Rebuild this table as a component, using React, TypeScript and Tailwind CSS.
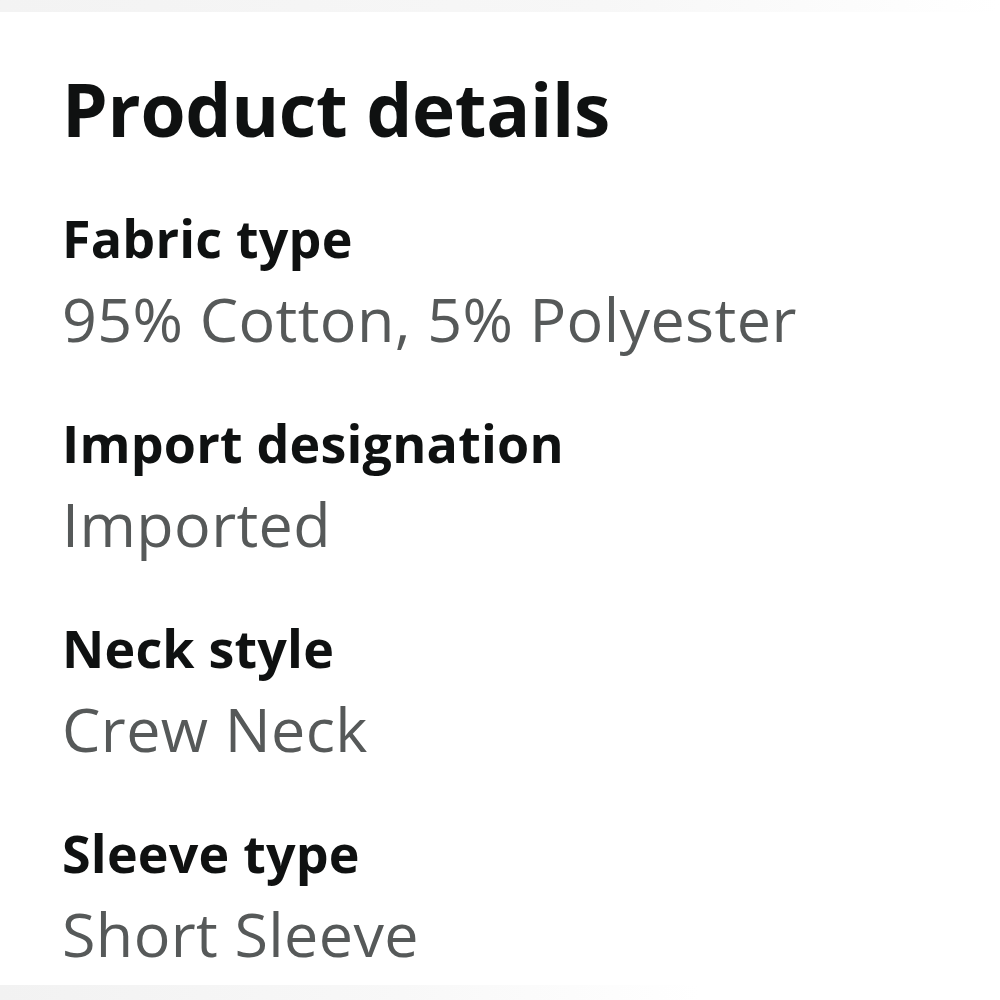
import React from 'react';

const details = [
  { label: 'Fabric type', value: '95% Cotton, 5% Polyester' },
  { label: 'Import designation', value: 'Imported' },
  { label: 'Neck style', value: 'Crew Neck' },
  { label: 'Sleeve type', value: 'Short Sleeve' },
];

export default function App() {
  return (
    <div className="w-[1000px] h-[1000px] bg-white flex flex-col overflow-hidden font-['Open_Sans',sans-serif]">
      {/* top edge of the card */}
      <div className="h-[12px] bg-gradient-to-r from-[#f3f3f3] via-[#f7f7f7] via-60% to-white" />

      <div className="flex-1 px-[62px] pt-[49px]">
        <h2 className="text-[73px] leading-[96px] font-bold text-[#0f1111] tracking-[-0.3px]">
          Product details
        </h2>

        <div className="flex flex-col mt-[45px] gap-[43px]">
          {details.map((d) => (
            <div key={d.label} className="flex flex-col">
              <span className="text-[52px] leading-[72px] font-bold text-[#0f1111] tracking-[0.2px]">
                {d.label}
              </span>
              <span className="text-[61px] leading-[90px] text-[#565959] tracking-[0.4px]">
                {d.value}
              </span>
            </div>
          ))}
        </div>
      </div>

      {/* bottom edge */}
      <div className="h-[15px] bg-gradient-to-r from-[#f2f2f2] via-[#f8f8f8] via-40% to-white to-70%" />
    </div>
  );
}
